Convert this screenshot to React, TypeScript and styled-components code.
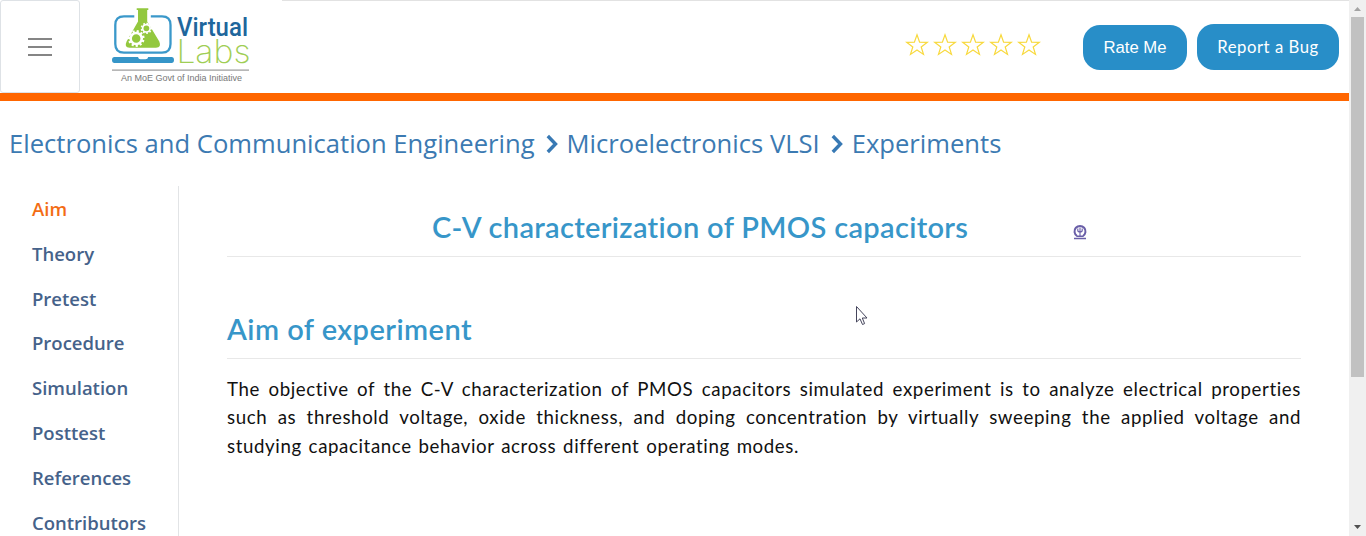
import React from 'react';
import styled, { createGlobalStyle } from 'styled-components';

const GlobalStyle = createGlobalStyle`
  *, *::before, *::after { box-sizing: border-box; }
  body { margin: 0; background: #fff; overflow: hidden; }
`;

const Window = styled.div`
  display: flex;
  width: 1366px;
  height: 536px;
  position: relative;
  overflow: hidden;
  font-family: 'Lato', sans-serif;
`;

const Page = styled.div`
  width: 1349px;
  height: 100%;
  display: flex;
  flex-direction: column;
  overflow: hidden;
`;

const Header = styled.header`
  flex: none;
  height: 101px;
  display: flex;
  align-items: flex-start;
  border-bottom: 8px solid #ff6600;
`;

const MenuButton = styled.button`
  width: 80px;
  height: 93px;
  padding: 0;
  display: flex;
  flex-direction: column;
  align-items: center;
  justify-content: center;
  gap: 6px;
  background: #fff;
  border: 1px solid #dee2e6;
  border-radius: 3px;
`;

const MenuBar = styled.span`
  width: 24px;
  height: 2px;
  background: #858585;
`;

const LogoLink = styled.a`
  width: 202px;
  height: 93px;
`;

const HeaderRight = styled.div`
  flex: 1;
  height: 93px;
  display: flex;
  justify-content: flex-end;
  align-items: flex-start;
  padding-right: 10px;
  border-top: 1px solid #e2e2e2;
`;

const Stars = styled.div`
  display: flex;
  gap: 4px;
  margin: 32px 32px 0 0;
`;

const PillButton = styled.button<{ $width: number; $height: number; $top: number; $font: string; $spacing: number }>`
  width: ${(p) => p.$width}px;
  height: ${(p) => p.$height}px;
  margin: ${(p) => p.$top}px 0 0 10px;
  padding: 0;
  border: 0;
  border-radius: 17px;
  background: #288ec8;
  color: #fff;
  font: 400 16.7px ${(p) => p.$font}, sans-serif;
  letter-spacing: ${(p) => p.$spacing}px;
`;

const Breadcrumb = styled.nav`
  flex: none;
  height: 85px;
  display: flex;
  align-items: center;
  padding-left: 9px;
  font: 400 25.6px/36px 'Open Sans', sans-serif;
  color: #3c7ab2;
  white-space: nowrap;
`;

const Chevron = styled.svg`
  width: 12px;
  height: 20px;
  margin: 0 9px 0 11px;
`;

const Body = styled.div`
  flex: 1;
  min-height: 0;
  display: flex;
`;

const Sidebar = styled.aside`
  width: 179px;
  padding: 0 0 0 32px;
  border-right: 1px solid #e2e4e6;
`;

const SideLink = styled.a<{ $active?: boolean }>`
  display: block;
  height: 44.83px;
  font: 600 18.5px/45px 'Open Sans', sans-serif;
  color: ${(p) => (p.$active ? '#f36c14' : '#45628a')};
`;

const Content = styled.main`
  width: 1074px;
  margin-left: 48px;
`;

const TitleRow = styled.div`
  height: 71px;
  display: flex;
  align-items: flex-start;
  padding-left: 205px;
  border-bottom: 1px solid #e8e8e8;
`;

const Title = styled.h1`
  margin: 23px 0 0;
  width: 641px;
  font: 600 29px/36px 'Lato', sans-serif;
  letter-spacing: 0.33px;
  color: #3796c9;
`;

const Emblem = styled.svg`
  width: 14px;
  height: 17px;
  margin-top: 36.5px;
`;

const SectionTitle = styled.h2`
  margin: 0;
  height: 102px;
  padding-top: 54px;
  border-bottom: 1px solid #e8e8e8;
  font: 600 29px/36px 'Lato', sans-serif;
  letter-spacing: 0.45px;
  color: #3796c9;
`;

const Paragraph = styled.p`
  margin: 15.6px 0 0;
  font: 400 18.7px/28.57px 'Lato', sans-serif;
  letter-spacing: 0.6px;
  color: #111;
`;

const TextLine = styled.span<{ $last?: boolean }>`
  display: block;
  white-space: ${(p) => (p.$last ? 'nowrap' : 'normal')};
  text-align-last: ${(p) => (p.$last ? 'left' : 'justify')};
  word-spacing: ${(p) => (p.$last ? '1.5px' : '0')};
`;

const Scrollbar = styled.div`
  width: 17px;
  height: 100%;
  display: flex;
  flex-direction: column;
  align-items: center;
  background: #f0f0f0;
`;

const ScrollArrow = styled.svg`
  width: 17px;
  height: 17px;
`;

const ScrollThumb = styled.div`
  width: 13px;
  height: 360px;
  margin-bottom: auto;
  background: #c1c1c1;
`;

const Cursor = styled.svg`
  position: absolute;
  left: 855px;
  top: 305px;
  width: 14px;
  height: 22px;
`;

function Star() {
  return (
    <svg width="24" height="24" viewBox="0 0 24 24">
      <path
        d="M12 1.8 L14.6 9.1 L22.4 9.3 L16.2 14 L18.5 21.4 L12 17 L5.5 21.4 L7.8 14 L1.6 9.3 L9.4 9.1 Z"
        fill="#fff"
        stroke="#f8d93c"
        strokeWidth="1.2"
      />
    </svg>
  );
}

function Gear({ x, y, r, teeth, width }: { x: number; y: number; r: number; teeth: number; width: number }) {
  return (
    <g transform={`translate(${x} ${y})`} stroke="#fff" fill="none">
      <circle r={r * 0.66} strokeWidth={r * 0.3} />
      {Array.from({ length: teeth }, (_, i) => (
        <line key={i} x1={0} y1={-r * 0.72} x2={0} y2={-r} strokeWidth={width} transform={`rotate(${(i * 360) / teeth + 12})`} />
      ))}
    </g>
  );
}

function Logo() {
  return (
    <svg width="202" height="93" viewBox="80 0 202 93">
      <path
        d="M134.3 16.4 H124 Q115.3 16.4 115.3 25 V44 Q115.3 52.6 124 52.6 H162 Q170.5 52.6 170.5 44 V25 Q170.5 16.4 162 16.4 H150.8"
        fill="none"
        stroke="#3a98ca"
        strokeWidth="2.3"
      />
      <path
        d="M114.5 57 H138 Q138.5 59.2 140.5 59.2 H145.5 Q147.8 59.2 148.2 57 H171.5 Q174 57 174 60 Q174 63 171.5 63 H114.5 Q112 63 112 60 Q112 57 114.5 57 Z"
        fill="#3595c8"
      />
      <path
        d="M136.7 8.2 H148.3 V10 H147.2 V21.5 L159.3 41.5 Q161.8 47.6 156 47.8 H129.5 Q123.8 47.6 126.6 41.5 L138 21.5 V10 H136.7 Z"
        fill="#93c83e"
      />
      <Gear x={136.2} y={38.5} r={8.4} teeth={11} width={2.2} />
      <Gear x={146.4} y={28.3} r={5.7} teeth={9} width={1.8} />
      <text x="177" y="35.6" fontFamily="Roboto, sans-serif" fontSize="25.5" fontWeight="500" fill="#20669c" textLength="71" lengthAdjust="spacingAndGlyphs">
        Virtual
      </text>
      <text x="176.4" y="62.7" fontFamily="Inter, sans-serif" fontSize="32" fontWeight="200" fill="#9fce55" textLength="74" lengthAdjust="spacingAndGlyphs">
        Labs
      </text>
      <rect x="112" y="69.5" width="137" height="1.2" fill="#999" />
      <text x="121" y="80.8" fontFamily="'Liberation Sans', sans-serif" fontSize="9" fill="#777">
        An MoE Govt of India Initiative
      </text>
    </svg>
  );
}

const Separator = () => (
  <Chevron viewBox="0 0 12 20">
    <path d="M1.8 2 L9.5 10 L1.8 18" fill="none" stroke="#3879b4" strokeWidth="3.4" />
  </Chevron>
);

const sections = ['Aim', 'Theory', 'Pretest', 'Procedure', 'Simulation', 'Posttest', 'References', 'Contributors'];

export default function App() {
  return (
    <Window>
      <GlobalStyle />
      <Page>
        <Header>
          <MenuButton aria-label="Menu">
            <MenuBar />
            <MenuBar />
            <MenuBar />
          </MenuButton>
          <LogoLink>
            <Logo />
          </LogoLink>
          <HeaderRight>
            <Stars>
              {[1, 2, 3, 4, 5].map((n) => (
                <Star key={n} />
              ))}
            </Stars>
            <PillButton $width={104} $height={45} $top={24} $font="'Liberation Sans'" $spacing={0}>
              Rate Me
            </PillButton>
            <PillButton $width={142} $height={46} $top={23} $font="'Lato'" $spacing={0.55}>
              Report a Bug
            </PillButton>
          </HeaderRight>
        </Header>
        <Breadcrumb>
          <span>Electronics and Communication Engineering</span>
          <Separator />
          <span>Microelectronics VLSI</span>
          <Separator />
          <span>Experiments</span>
        </Breadcrumb>
        <Body>
          <Sidebar>
            {sections.map((name, i) => (
              <SideLink key={name} $active={i === 0}>
                {name}
              </SideLink>
            ))}
          </Sidebar>
          <Content>
            <TitleRow>
              <Title>C-V characterization of PMOS capacitors</Title>
              <Emblem viewBox="0 0 14 17" fill="none" stroke="#6a5fa8">
                <path d="M4 13 A5.5 5.5 0 1 1 10 13" strokeWidth="2" />
                <path d="M7 4.5 V13 M4.8 5.5 V8 Q7 10 9.2 8 V5.5" strokeWidth="1.1" />
                <path d="M3.5 13.2 H10.5 M1 15.4 H13" strokeWidth="1.5" />
              </Emblem>
            </TitleRow>
            <SectionTitle>Aim of experiment</SectionTitle>
            <Paragraph>
              <TextLine>The objective of the C-V characterization of PMOS capacitors simulated experiment is to analyze electrical properties</TextLine>
              <TextLine>such as threshold voltage, oxide thickness, and doping concentration by virtually sweeping the applied voltage and</TextLine>
              <TextLine $last>studying capacitance behavior across different operating modes.</TextLine>
            </Paragraph>
          </Content>
        </Body>
      </Page>
      <Scrollbar>
        <ScrollArrow viewBox="0 0 17 17">
          <path d="M5 11 L8.5 7 L12 11 Z" fill="#a3a3a3" />
        </ScrollArrow>
        <ScrollThumb />
        <ScrollArrow viewBox="0 0 17 17">
          <path d="M5 6 L8.5 10 L12 6 Z" fill="#505050" />
        </ScrollArrow>
      </Scrollbar>
      <Cursor viewBox="0 0 14 22">
        <path d="M1.5 1.5 V17 L5 13.8 L7.5 19.5 L9.6 18.6 L7.3 13 H12 Z" fill="#fff" stroke="#45455c" strokeWidth="1" />
      </Cursor>
    </Window>
  );
}
